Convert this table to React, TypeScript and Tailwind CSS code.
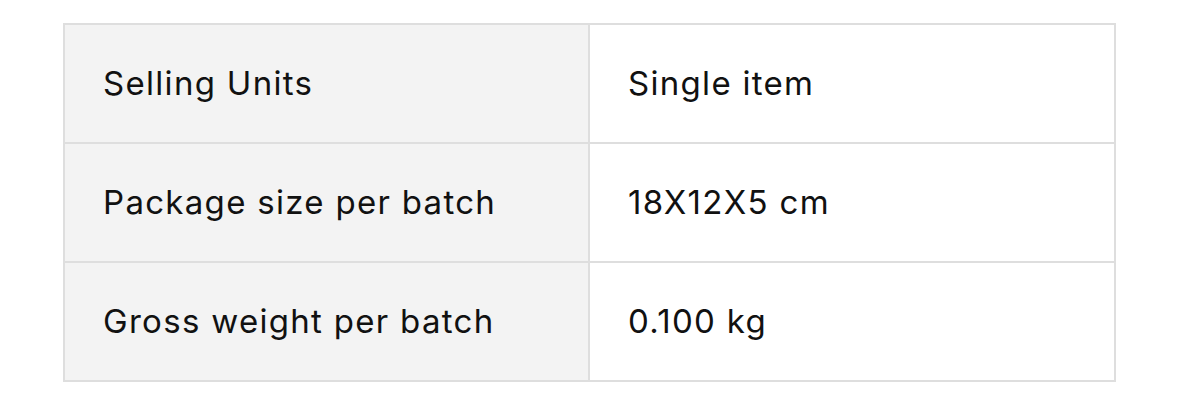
import React from 'react';

const rows = [
  { label: 'Selling Units', value: 'Single item' },
  { label: 'Package size per batch', value: '18X12X5 cm' },
  { label: 'Gross weight per batch', value: '0.100 kg' },
];

export default function App() {
  return (
    <div className="w-[1179px] h-[417px] bg-white pl-[63px] pt-[23px]" style={{ fontFamily: 'Inter, "Noto Sans", sans-serif' }}>
      <table className="border-collapse w-[1053px] text-[33px] tracking-[1.3px] text-[#111111]">
        <tbody>
          {rows.map((row) => (
            <tr key={row.label} className="h-[119px]">
              <td className="w-[525px] border-2 border-[#dedede] bg-[#f3f3f3] pl-[38px] align-middle">
                {row.label}
              </td>
              <td className="border-2 border-[#dedede] bg-white pl-[38px] align-middle">
                {row.value}
              </td>
            </tr>
          ))}
        </tbody>
      </table>
    </div>
  );
}
